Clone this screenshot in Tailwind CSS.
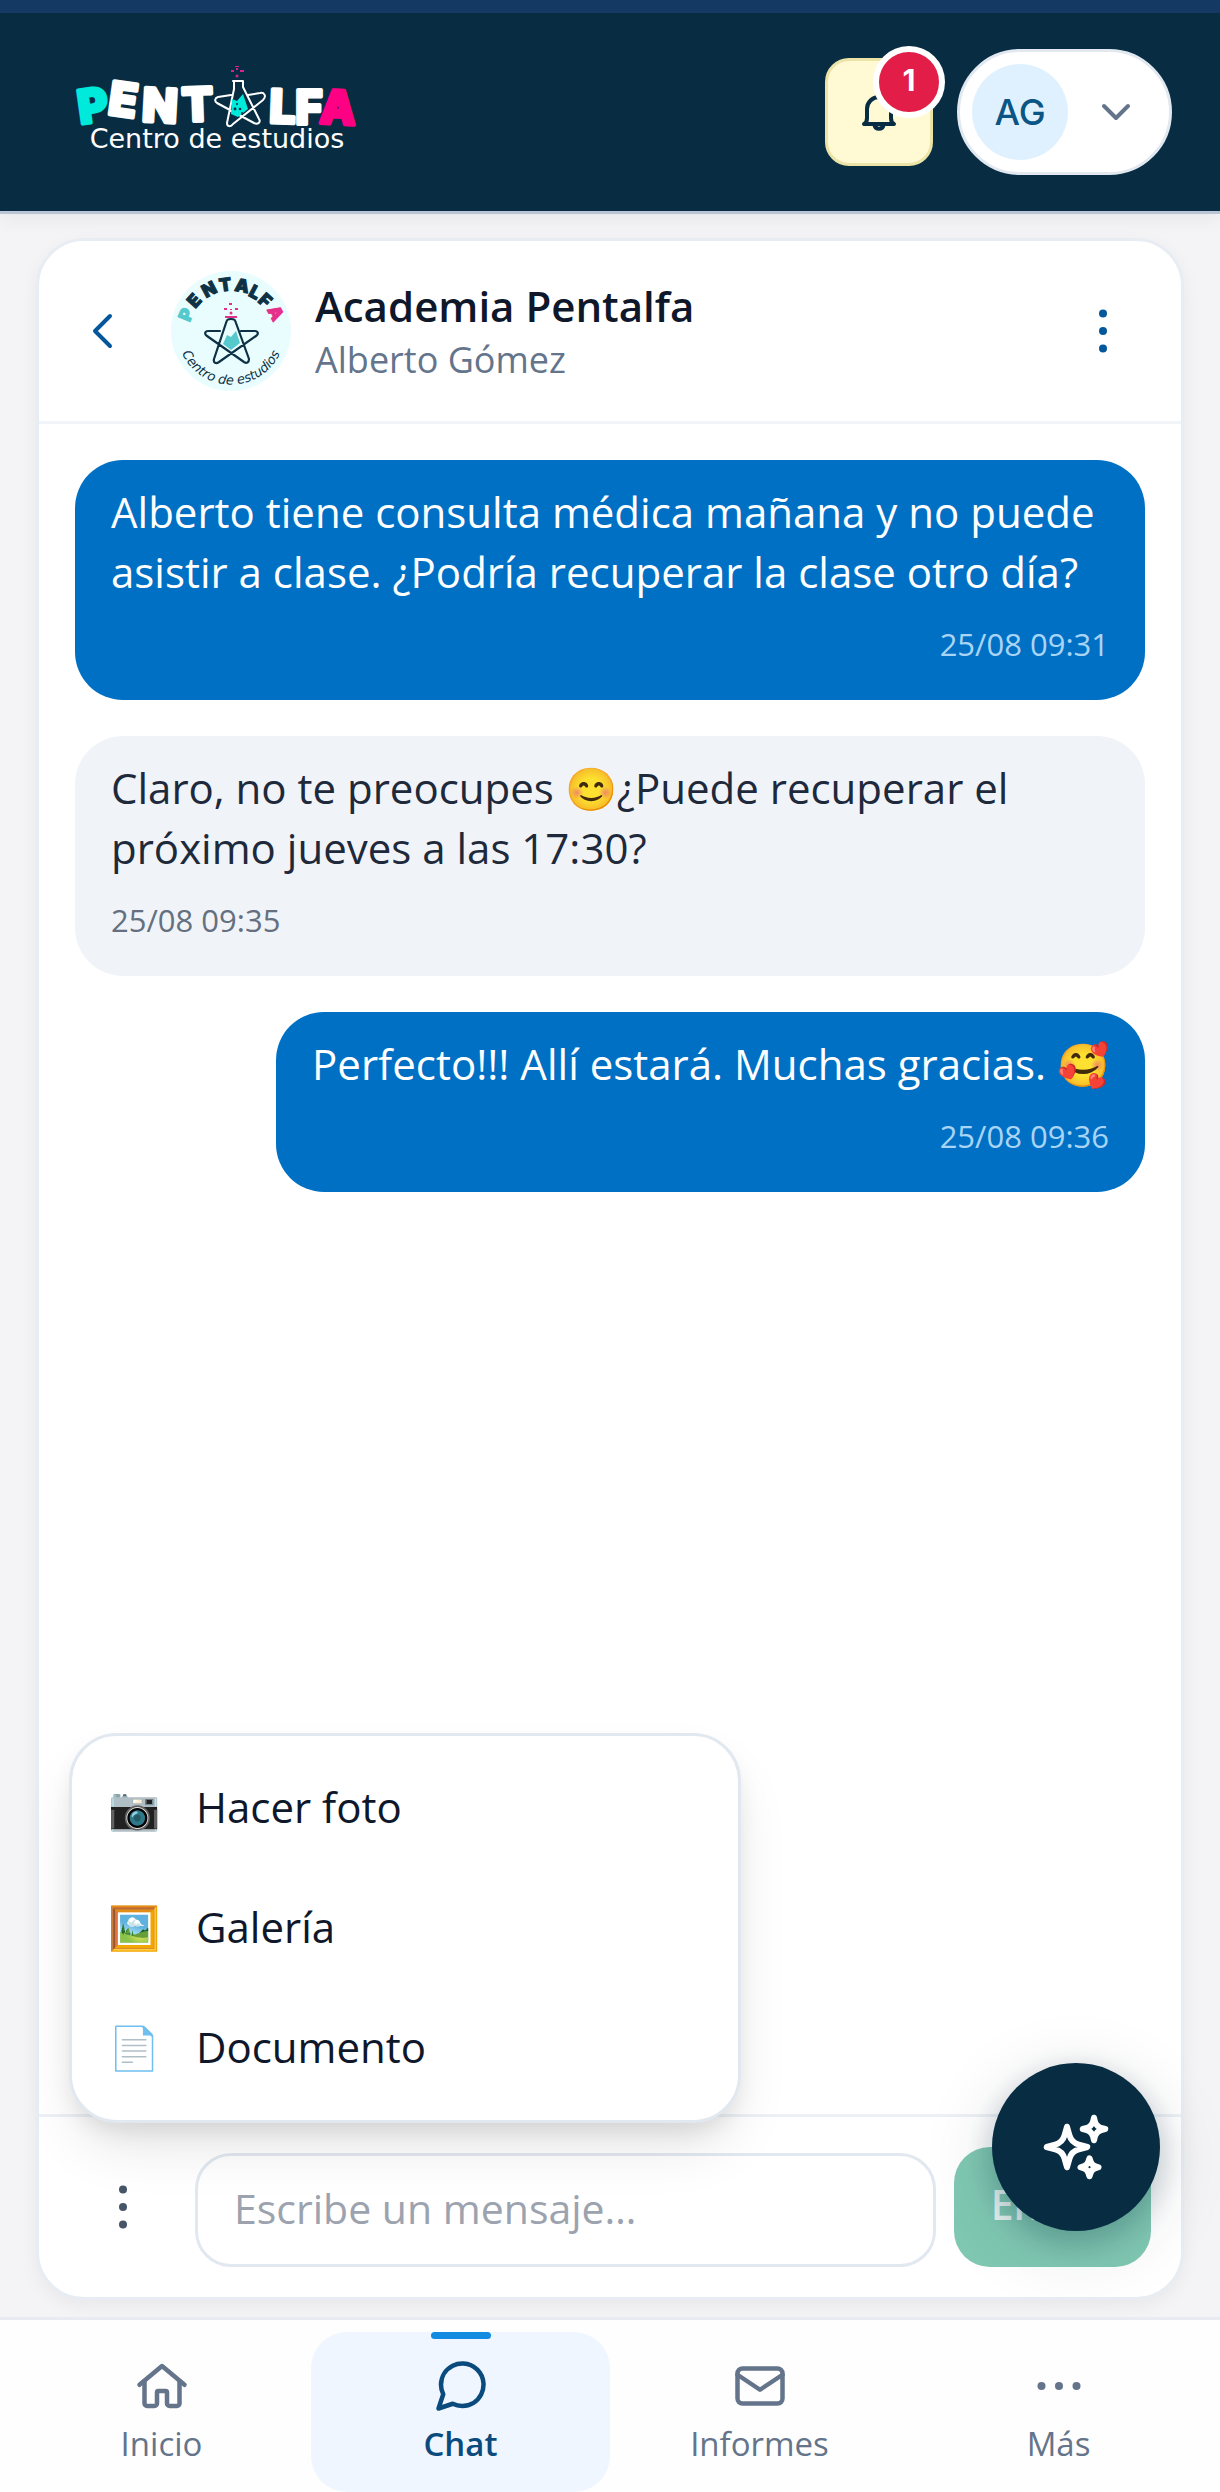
<!DOCTYPE html>
<html lang="es">
<head>
<meta charset="utf-8">
<meta name="viewport" content="width=device-width, initial-scale=1">
<title>Chat · Academia Pentalfa</title>
<script src="https://cdn.jsdelivr.net/npm/@tailwindcss/browser@4"></script>
</head>
<body class="flex min-h-screen flex-col bg-[#f4f4f6] font-['Open_Sans',sans-serif] text-[#0f172a]">

<!-- App header -->
<header class="border-t-[13px] border-b-[3px] border-t-[#143a63] border-b-[#b9c4d4] bg-[#082d43] shadow-[0_6px_18px_rgba(15,23,42,0.05)]">
  <div class="flex h-[198px] items-center justify-between pr-12 pl-[65px]">
    <a href="#" aria-label="Pentalfa, Centro de estudios">
      <svg class="h-[100px] w-[304px]" viewBox="-10 0 304 100" fill="none">
        <g font-family="Inter, sans-serif" font-weight="800" font-size="46" text-anchor="middle" fill="#fff" stroke="#fff" stroke-width="4" stroke-linejoin="round">
          <text transform="translate(20 60) rotate(-8)" fill="#00eadb" stroke="#00eadb">P</text>
          <text transform="translate(46 54) rotate(8)">E</text>
          <text transform="translate(84 60) rotate(3)">N</text>
          <text transform="translate(123 59) rotate(-2)">T</text>
          <text transform="translate(207 61) rotate(2)">L</text>
          <text transform="translate(234 62)">F</text>
          <text transform="translate(262 62) rotate(3)" fill="#ff0084" stroke="#ff0084">A</text>
        </g>
        <g stroke="#fff" stroke-width="2" stroke-linecap="round" stroke-linejoin="round">
          <path d="M156 33 143 35c-3 1-4 4-1 6l37 20c4 2 7-1 5-4l-16-32V19M159 19v8l-7 34c0 4 4 4 6 1l30-24c4-4 1-8-3-7l-12 2M158 19h10"/>
          <path d="m157 37 5 2 6-7 5 15-10 8-7-3z" fill="#00eadb" stroke="none"/>
          <g fill="#082d43" stroke="none"><circle cx="162" cy="42" r="1"/><circle cx="160" cy="47" r="1.400"/><circle cx="165" cy="47" r="1.300"/><circle cx="167" cy="51" r="1"/></g>
        </g>
        <g fill="#d6248c"><circle cx="162" cy="14" r="1.500"/><path d="M156 8h3v2h-3zM160 4h4v1h-4zM165 8h4v2h-4zM161 6h2v2h-2z"/></g>
        <text x="142" y="86" text-anchor="middle" font-family="DejaVu Sans, sans-serif" font-size="27" fill="#fff">Centro de estudios</text>
      </svg>
    </a>
    <div class="flex items-center gap-6">
      <button type="button" aria-label="Notificaciones, 1 nueva" class="relative flex size-[108px] items-center justify-center rounded-3xl border-[3px] border-[#ece3a7] bg-[#fff9d4]">
        <svg class="size-12" viewBox="0 0 48 48" fill="none" stroke="#082d43" stroke-width="4" stroke-linecap="round" stroke-linejoin="round"><path d="M9 36h30c-2-1-3-3-3-6v-9a12 12 0 0 0-24 0v9c0 3-1 5-3 6Z"/><path d="M19.500 37c1 5 8 5 9 0"/></svg>
        <span class="absolute -top-[15px] -right-[15px] flex size-[72px] items-center justify-center rounded-full border-[6px] border-white bg-[#e11d48] pb-1 font-['Inter',sans-serif] text-[30px] leading-9 font-bold text-white">1</span>
      </button>
      <button type="button" aria-label="Cuenta" class="flex h-[126px] w-[215px] items-center justify-between rounded-full border-[3px] border-[#e2e8f0] bg-white pr-[38px] pl-3">
        <span class="flex size-24 items-center justify-center rounded-full bg-[#dff1fe] font-['Inter',sans-serif] text-[36px] leading-[44px] font-medium text-[#0a5583]">AG</span>
        <svg class="h-5 w-[30px]" viewBox="0 0 30 20" fill="none" stroke="#64748b" stroke-width="4" stroke-linecap="round" stroke-linejoin="round"><path d="m3 4 12 12L27 4"/></svg>
      </button>
    </div>
  </div>
</header>

<main class="flex grow flex-col px-9 pt-6 pb-[17px]">
  <section class="flex grow flex-col rounded-[48px] border-[3px] border-[#e8edf3] bg-white shadow-[0_6px_18px_rgba(15,23,42,0.05)]">

    <!-- Conversation header -->
    <div class="flex h-[183px] items-center border-b-[3px] border-[#f1f5f9] px-6">
      <button type="button" aria-label="Volver" class="flex size-[78px] items-center justify-center">
        <svg class="size-12" viewBox="0 0 48 48" fill="none" stroke="#05579b" stroke-width="4" stroke-linecap="round" stroke-linejoin="round"><path d="M32 9 17 24l15 15"/></svg>
      </button>
      <svg class="mr-6 ml-[30px] size-[120px]" viewBox="0 0 120 120" fill="none" role="img" aria-label="Logo de Pentalfa">
        <circle cx="60" cy="60" r="60" fill="#e9fdff"/>
        <g font-family="Inter, sans-serif" font-weight="900" font-size="18" text-anchor="middle" fill="#0d3145" stroke="#0d3145" stroke-linejoin="round">
          <text transform="translate(21 46) rotate(-68)" fill="#55c9cb" stroke="#55c9cb">P</text>
          <text transform="translate(28 34) rotate(-48)">E</text>
          <text transform="translate(41 24) rotate(-28)">N</text>
          <text transform="translate(55 20) rotate(-8)">T</text>
          <text transform="translate(70 21) rotate(10)">A</text>
          <text transform="translate(81 27) rotate(28)">L</text>
          <text transform="translate(90 34) rotate(42)">F</text>
          <text transform="translate(99 45) rotate(62)" fill="#e5308b" stroke="#e5308b">A</text>
        </g>
        <path id="lower-arc" d="M7 70a54 54 0 0 0 106 0"/>
        <text font-family="DejaVu Sans, sans-serif" font-size="13" font-style="italic" fill="#0d3145"><textPath href="#lower-arc" startOffset="50%" text-anchor="middle">Centro de estudios</textPath></text>
        <path d="m56 64 4 2 5-6 4 12-9 7-8-6z" fill="#55c9cb"/>
        <g stroke="#0d3145" stroke-width="2.200" stroke-linecap="round" stroke-linejoin="round"><path d="M49 60H37c-3 0-4 3-1 5l37 26c3 2 5 0 5-3L65 52c-1-3-1-4-5-4s-4 1-5 4L43 88c-1 4 2 5 5 3l37-26c3-2 2-5-1-5H70"/></g>
        <g fill="#e5308b"><path d="M54 45h12v2H54z"/><circle cx="60" cy="42" r="1.500"/><path d="M58 32h3v2h-3zM53 37h3v2h-3zM64 37h3v2h-3zM59 38h2v1h-2z"/></g>
      </svg>
      <div class="grow pt-[3px]">
        <h1 class="text-[42px] leading-[54px] font-semibold">Academia Pentalfa</h1>
        <p class="text-[36px] leading-[54px] text-[#64748b]">Alberto Gómez</p>
      </div>
      <button type="button" aria-label="Opciones" class="flex size-[108px] items-center justify-center">
        <svg class="size-12" viewBox="0 0 48 48" fill="#05579b"><circle cx="24" cy="6.500" r="4"/><circle cx="24" cy="24" r="4"/><circle cx="24" cy="41.500" r="4"/></svg>
      </button>
    </div>

    <!-- Messages -->
    <div class="flex grow flex-col gap-9 p-9 text-[42px] leading-[60px]">
      <article class="self-end rounded-[48px] bg-[#0070c5] px-9 pt-[22px] pb-[26px] text-white">
        <p>Alberto tiene consulta médica mañana y no puede asistir a clase. ¿Podría recuperar la clase otro día?</p>
        <time class="mt-3 block text-right text-[31px] leading-[60px] text-[#a8d4f5]">25/08 09:31</time>
      </article>
      <article class="self-start rounded-[48px] bg-[#f0f4f9] px-9 pt-[22px] pb-[26px] text-[#1e293b]">
        <p>Claro, no te preocupes 😊¿Puede recuperar el próximo jueves a las 17:30?</p>
        <time class="mt-3 block text-[31px] leading-[60px] text-[#64707f]">25/08 09:35</time>
      </article>
      <article class="self-end rounded-[48px] bg-[#0070c5] px-9 pt-[22px] pb-[26px] text-white">
        <p>Perfecto!!! Allí estará. Muchas gracias. 🥰</p>
        <time class="mt-3 block text-right text-[31px] leading-[60px] text-[#a8d4f5]">25/08 09:36</time>
      </article>
    </div>

    <!-- Composer -->
    <form class="relative flex items-end gap-[18px] border-t-[3px] border-[#edf1f6] p-[30px]">
      <button type="button" aria-label="Adjuntar" aria-expanded="true" class="flex h-[120px] w-[108px] shrink-0 items-center justify-center">
        <svg class="size-12" viewBox="0 0 48 48" fill="#475569"><circle cx="24" cy="6.500" r="4"/><circle cx="24" cy="24" r="4"/><circle cx="24" cy="41.500" r="4"/></svg>
      </button>
      <input type="text" aria-label="Mensaje" placeholder="Escribe un mensaje…" class="h-[114px] min-w-0 grow rounded-[36px] border-[3px] border-[#e2e8f0] bg-white px-9 pb-1 text-[41px] placeholder:text-[#9ca3af]">
      <button type="submit" disabled class="h-[120px] w-[197px] shrink-0 rounded-[36px] bg-[#80c8b2] pb-1 text-[41px] font-semibold text-[#e8f3f1]">Enviar</button>

      <!-- Attachment menu -->
      <div role="menu" class="absolute bottom-[174px] left-[30px] w-[672px] rounded-[48px] border-[3px] border-[#e2e8f0] bg-white py-3 text-[42px] font-medium shadow-[0_30px_60px_-12px_rgba(0,0,0,0.12),0_12px_24px_-6px_rgba(0,0,0,0.1)]">
        <button type="button" role="menuitem" class="flex h-[120px] w-full items-center gap-9 px-9 pb-1"><span class="flex w-[52px] justify-center text-[42px]">📷</span>Hacer foto</button>
        <button type="button" role="menuitem" class="flex h-[120px] w-full items-center gap-9 px-9 pb-1"><span class="flex w-[52px] justify-center text-[42px]">🖼️</span>Galería</button>
        <button type="button" role="menuitem" class="flex h-[120px] w-full items-center gap-9 px-9 pb-1"><span class="flex w-[52px] justify-center text-[42px]">📄</span>Documento</button>
      </div>
    </form>
  </section>
</main>

<!-- Bottom navigation -->
<nav class="grid grid-cols-4 border-t-[3px] border-[#e8ebf1] bg-[#fefefe] px-3 pt-3 text-[33px] leading-[56px] font-medium text-[#64748b]">
  <a href="#" class="flex h-40 flex-col items-center pt-6">
    <svg class="size-[60px]" viewBox="0 0 24 24" fill="none" stroke="currentColor" stroke-width="1.800" stroke-linecap="round" stroke-linejoin="round"><path d="m3 11.500 9-7.500 9 7.500"/><path d="M5 10v9a1 1 0 0 0 1 1h3a1 1 0 0 0 1-1v-4.500a.5.5 0 0 1 .5-.5h3a.5.5 0 0 1 .5.500V19a1 1 0 0 0 1 1h3a1 1 0 0 0 1-1v-9"/></svg>
    Inicio
  </a>
  <a href="#" aria-current="page" class="relative flex h-40 flex-col items-center rounded-[36px] bg-[#eff6ff] pt-6 font-semibold text-[#0b4a7c]">
    <span class="absolute top-0 h-[7px] w-[60px] rounded-full bg-[#138be0]"></span>
    <svg class="size-[60px]" viewBox="0 0 24 24" fill="none" stroke="currentColor" stroke-width="1.800" stroke-linecap="round" stroke-linejoin="round"><path d="M21 11.500a8.380 8.380 0 0 1-.9 3.800 8.500 8.500 0 0 1-7.600 4.700 8.380 8.380 0 0 1-3.800-.9L3 21l1.900-5.700a8.380 8.380 0 0 1-.9-3.800 8.500 8.500 0 0 1 4.700-7.600 8.380 8.380 0 0 1 3.800-.9h.5a8.480 8.480 0 0 1 8 8v.5z"/></svg>
    Chat
  </a>
  <a href="#" class="flex h-40 flex-col items-center pt-6">
    <svg class="size-[60px]" viewBox="0 0 24 24" fill="none" stroke="currentColor" stroke-width="1.800" stroke-linecap="round" stroke-linejoin="round"><rect x="3" y="5" width="18" height="14" rx="2"/><path d="m3 7.500 9 6 9-6"/></svg>
    Informes
  </a>
  <a href="#" class="flex h-40 flex-col items-center pt-6">
    <svg class="size-[60px]" viewBox="0 0 24 24" fill="currentColor"><circle cx="5" cy="12" r="1.600"/><circle cx="12" cy="12" r="1.600"/><circle cx="19" cy="12" r="1.600"/></svg>
    Más
  </a>
</nav>

<!-- Floating assistant button -->
<button type="button" aria-label="Asistente" class="fixed right-[60px] bottom-[261px] flex size-[168px] items-center justify-center rounded-full bg-[#082d43] shadow-[0_15px_75px_rgba(8,45,67,0.14),0_9px_30px_rgba(8,45,67,0.24)]">
  <svg class="size-[72px]" viewBox="0 0 24 24" fill="none" stroke="#fff" stroke-width="2" stroke-linecap="round" stroke-linejoin="round"><path d="M9.813 15.904 9 18.750l-.813-2.846a4.500 4.500 0 0 0-3.090-3.090L2.250 12l2.846-.813a4.500 4.500 0 0 0 3.090-3.090L9 5.250l.813 2.846a4.500 4.500 0 0 0 3.090 3.090L15.750 12l-2.846.813a4.500 4.500 0 0 0-3.090 3.090ZM18.259 8.715 18 9.750l-.259-1.035a3.375 3.375 0 0 0-2.455-2.456L14.250 6l1.036-.259a3.375 3.375 0 0 0 2.455-2.456L18 2.250l.259 1.035a3.375 3.375 0 0 0 2.456 2.456L21.750 6l-1.035.259a3.375 3.375 0 0 0-2.456 2.456ZM16.894 20.567 16.500 21.750l-.394-1.183a2.250 2.250 0 0 0-1.423-1.423L13.500 18.750l1.183-.394a2.250 2.250 0 0 0 1.423-1.423l.394-1.183.394 1.183a2.250 2.250 0 0 0 1.423 1.423l1.183.394-1.183.394a2.250 2.250 0 0 0-1.423 1.423Z"/></svg>
</button>
</body>
</html>
